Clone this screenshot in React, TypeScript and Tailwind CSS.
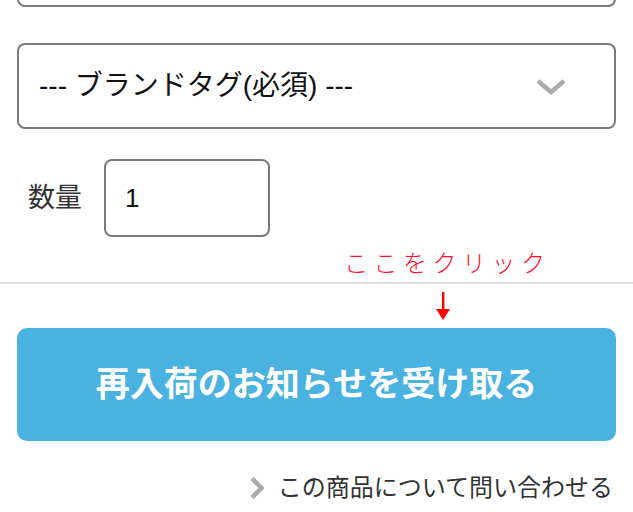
import React from "react";

const jp = { fontFamily: '"Liberation Sans", "Noto Sans CJK JP", sans-serif' };

export default function App() {
  return (
    <div className="w-[633px] h-[512px] overflow-hidden bg-white text-[#222]" style={jp}>
      <div className="px-[17px]">
        <div className="h-[60px] -mt-[53px] border-2 border-[#7a7a7a] rounded-lg" />
        <div className="mt-[36px] h-[86px] border-2 border-[#7a7a7a] rounded-lg flex items-center justify-between pl-[20px] pr-[47px]">
          <span className="text-[28px] text-[#111]">--- ブランドタグ(必須) ---</span>
          <svg width="32" height="18" viewBox="0 0 32 18" className="mt-[2px]">
            <path d="M3 3 L16 14 L29 3" fill="none" stroke="#aaaaaa" strokeWidth="4.5" strokeLinecap="butt" strokeLinejoin="miter" />
          </svg>
        </div>
        <div className="mt-[30px] flex items-center">
          <span className="ml-[11px] text-[27px] text-[#333] w-[76px]">数量</span>
          <div className="w-[166px] h-[78px] border-2 border-[#7a7a7a] rounded-lg flex items-center pl-[19px]">
            <span className="text-[26px] text-[#111]">1</span>
          </div>
        </div>
        <div className="mt-[12px] h-[30px] leading-[30px] pl-[327px] text-[24px] font-light tracking-[5.5px] text-[#ff1030]">
          ここをクリック
        </div>
      </div>
      <div className="mt-[3px] h-[2px] bg-[#dddddd]" />
      <div className="px-[17px]">
        <svg width="18" height="28" viewBox="0 0 18 28" className="block mt-[8px] ml-[417px]">
          <rect x="8" y="0" width="2.4" height="19" fill="#ff0000" />
          <path d="M2 17 L16 17 L9 28 Z" fill="#ff0000" />
        </svg>
        <div className="mt-[8px] h-[113px] rounded-[10px] bg-[#4ab2e0] flex items-center justify-center">
          <span className="text-[34px] font-bold text-white">再入荷のお知らせを受け取る</span>
        </div>
        <div className="mt-[35px] h-[24px] flex items-center justify-end pr-[3px]">
          <svg width="18" height="24" viewBox="0 0 18 24" className="mr-[12px]">
            <path d="M4 2.5 L13.5 12 L4 21.5" fill="none" stroke="#aaaaaa" strokeWidth="4.5" strokeLinejoin="miter" />
          </svg>
          <span className="text-[24px] leading-[24px] text-[#333]">この商品について問い合わせる</span>
        </div>
      </div>
    </div>
  );
}
